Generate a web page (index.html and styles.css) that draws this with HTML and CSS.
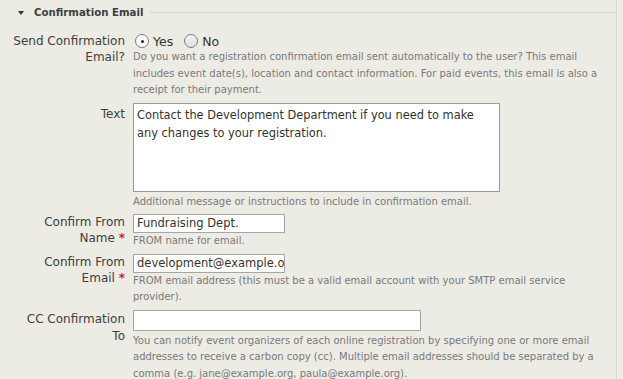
FILE: index.html
```html
<!DOCTYPE html>
<html lang="en">
<head>
    <meta charset="UTF-8">
    <title>Confirmation Email</title>
    <link rel="stylesheet" href="styles.css">
</head>
<body>
    <div class="panel">
        <div class="section-head">
            <span class="toggle"></span>
            <span class="section-title">Confirmation Email</span>
            <span class="section-rule"></span>
        </div>

        <div class="row">
            <div class="label">Send Confirmation<br>Email?</div>
            <div class="field">
                <div class="radios">
                    <span class="radio checked"></span><span class="radio-text">Yes</span>
                    <span class="radio"></span><span class="radio-text">No</span>
                </div>
                <div class="description">Do you want a registration confirmation email sent automatically to the user? This email includes event date(s), location and contact information. For paid events, this email is also a receipt for their payment.</div>
            </div>
        </div>

        <div class="row">
            <div class="label label-pad">Text</div>
            <div class="field">
                <div class="textarea">Contact the Development Department if you need to make any changes to your registration.</div>
                <div class="description desc-after-area">Additional message or instructions to include in confirmation email.</div>
            </div>
        </div>

        <div class="row">
            <div class="label">Confirm From<br>Name <span class="required">*</span></div>
            <div class="field">
                <div class="input input-short">Fundraising Dept.</div>
                <div class="description">FROM name for email.</div>
            </div>
        </div>

        <div class="row">
            <div class="label">Confirm From<br>Email <span class="required">*</span></div>
            <div class="field">
                <div class="input input-short">development@example.org</div>
                <div class="description">FROM email address (this must be a valid email account with your SMTP email service provider).</div>
            </div>
        </div>

        <div class="row">
            <div class="label label-tall">CC Confirmation<br>To</div>
            <div class="field">
                <div class="input input-long"></div>
                <div class="description">You can notify event organizers of each online registration by specifying one or more email addresses to receive a carbon copy (cc). Multiple email addresses should be separated by a comma (e.g. jane@example.org, paula@example.org).</div>
            </div>
        </div>
    </div>
</body>
</html>
```

FILE: styles.css
```css
body {
    margin: 0;
    background-color: #ecebe4;
    font-family: "DejaVu Sans", Verdana, sans-serif;
    color: #333;
}
.panel {
    width: 617px;
    height: 379px;
    border-right: 1px solid #dcdad3;
    box-sizing: border-box;
    overflow: hidden;
}
.section-head {
    display: flex;
    align-items: center;
    height: 24px;
    padding-left: 18px;
}
.toggle {
    width: 0;
    height: 0;
    border-left: 3px solid transparent;
    border-right: 3px solid transparent;
    border-top: 4px solid #333;
    margin-right: 10px;
    margin-top: 2px;
}
.section-title {
    font-size: 10.2px;
    font-weight: bold;
    color: #3f3f3f;
}
.section-rule {
    flex: 1;
    border-top: 1px solid #d6d4cc;
    margin-left: 7px;
}
.row {
    display: flex;
    margin-bottom: 4px;
}
.row:nth-child(2) {
    margin-top: 9px;
}
.label {
    width: 125px;
    flex: none;
    text-align: right;
    font-size: 12px;
    line-height: 16px;
    color: #3f3f3f;
}
.label-pad {
    padding-top: 3px;
}
.label-tall {
    line-height: 17.5px;
    padding-top: 1px;
}
.required {
    color: #c8261c;
    font-weight: bold;
}
.field {
    margin-left: 8px;
    flex: 1;
    padding-right: 2px;
}
.radios {
    display: flex;
    align-items: center;
    height: 16px;
    font-size: 12.5px;
}
.radio {
    width: 12px;
    height: 12px;
    border: 1px solid #7a7a7a;
    border-radius: 50%;
    background: linear-gradient(#f4f4f4, #dedede);
    margin-left: 2px;
    margin-right: 4px;
    position: relative;
}
.radio.checked {
    background: #fafafa;
}
.radio.checked::after {
    content: "";
    position: absolute;
    left: 4.5px;
    top: 4.5px;
    width: 3px;
    height: 3px;
    border-radius: 50%;
    background: #222;
}
.radio-text {
    margin-right: 9px;
}
.description {
    font-size: 10px;
    line-height: 16.5px;
    color: #7a7a7a;
}
.textarea {
    width: 359px;
    height: 83px;
    background: #fff;
    border: 1px solid #9a9a9a;
    padding: 2px 3px;
    font-size: 11.4px;
    line-height: 18px;
    color: #333;
}
.desc-after-area {
    margin-top: 2px;
}
.input {
    height: 17px;
    background: #fff;
    border: 1px solid #a6a6a6;
    padding: 0 3px;
    font-size: 11.5px;
    line-height: 17px;
    color: #333;
    white-space: nowrap;
    overflow: hidden;
}
.input-short {
    width: 144px;
}
.input-long {
    width: 280px;
    height: 19px;
}
.input-long + .description {
    margin-top: 2px;
}
```
